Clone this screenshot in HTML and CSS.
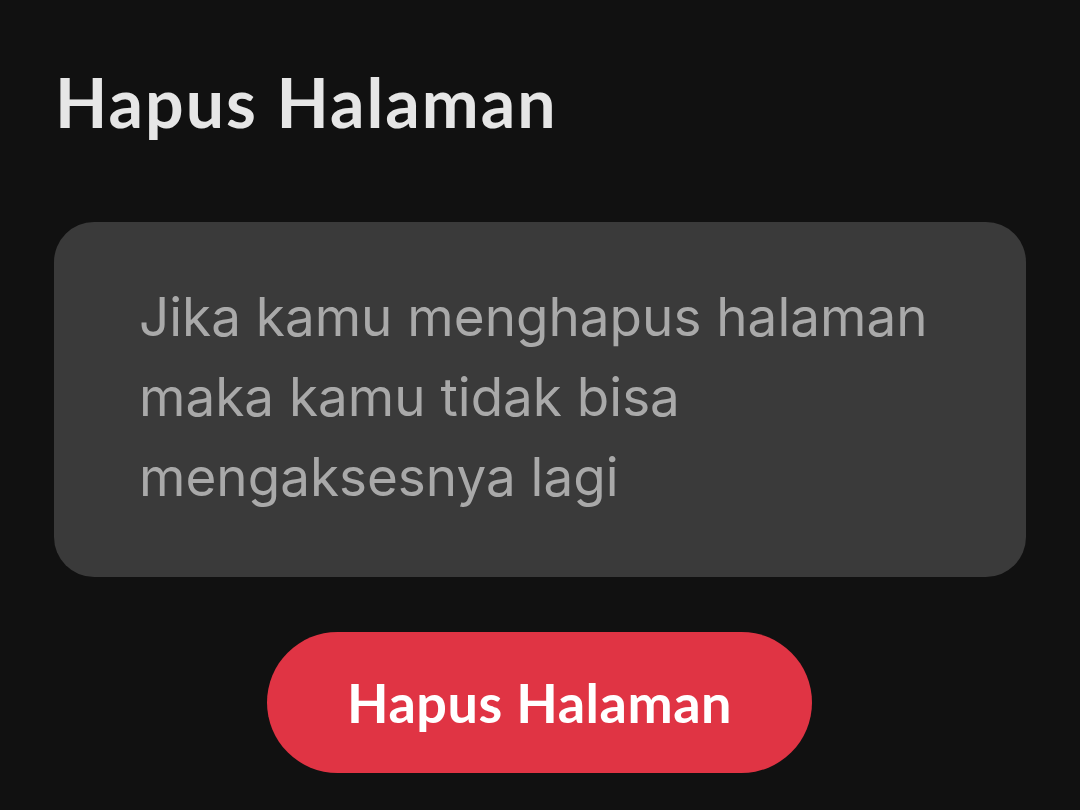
FILE: index.html
```html
<!DOCTYPE html>
<html lang="id">
<head>
<meta charset="utf-8">
<title>Hapus Halaman</title>
<link rel="stylesheet" href="styles.css">
</head>
<body>
<main class="sheet">
  <h1 class="title">Hapus Halaman</h1>
  <div class="notice">
    <p class="notice-text">Jika kamu menghapus halaman maka kamu tidak bisa mengaksesnya lagi</p>
  </div>
  <div class="actions">
    <button class="btn-danger" type="button">Hapus Halaman</button>
  </div>
</main>
</body>
</html>
```
FILE: styles.css
```css
html, body {
  margin: 0;
  padding: 0;
  background: #111111;
  width: 1080px;
  height: 810px;
  overflow: hidden;
}
.sheet {
  padding: 57px 54px 0 54px;
  display: flex;
  flex-direction: column;
}
.title {
  margin: 0 0 0 1px;
  font-family: Lato, "Noto Sans", sans-serif;
  font-weight: 700;
  font-size: 68px;
  line-height: 90px;
  color: #e6e6e6;
  letter-spacing: 2px;
}
.notice {
  margin-top: 75px;
  background: #3a3a3a;
  border-radius: 40px;
  height: 355px;
  box-sizing: border-box;
  padding: 55px 40px 0 85px;
}
.notice-text {
  margin: 0;
  font-family: Inter, "Noto Sans", sans-serif;
  font-size: 53px;
  line-height: 80px;
  color: #a9a9a9;
  width: 820px;
}
.actions {
  display: flex;
  justify-content: center;
  margin-top: 55px;
}
.btn-danger {
  width: 545px;
  height: 141px;
  border: none;
  border-radius: 71px;
  background: #e03444;
  color: #ffffff;
  font-family: Lato, "Noto Sans", sans-serif;
  font-weight: 700;
  font-size: 54px;
  letter-spacing: 0.5px;
  padding: 0;
  margin-left: -1px;
}
```
